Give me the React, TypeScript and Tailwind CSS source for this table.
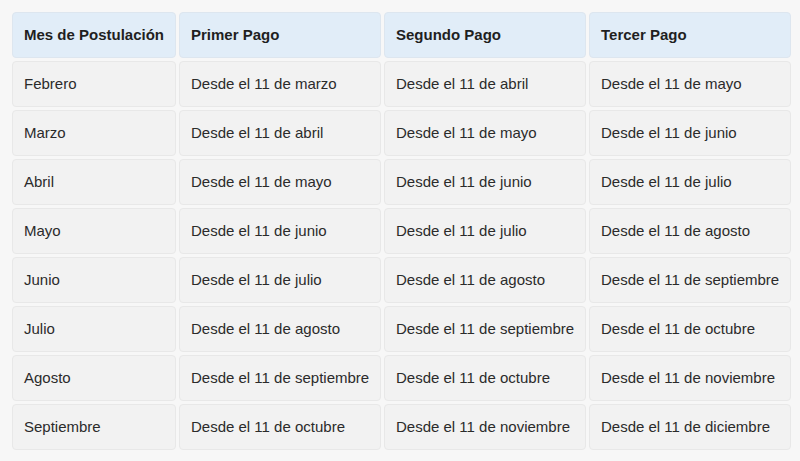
const rows: [string, string, string, string][] = [
  ['Febrero', 'marzo', 'abril', 'mayo'],
  ['Marzo', 'abril', 'mayo', 'junio'],
  ['Abril', 'mayo', 'junio', 'julio'],
  ['Mayo', 'junio', 'julio', 'agosto'],
  ['Junio', 'julio', 'agosto', 'septiembre'],
  ['Julio', 'agosto', 'septiembre', 'octubre'],
  ['Agosto', 'septiembre', 'octubre', 'noviembre'],
  ['Septiembre', 'octubre', 'noviembre', 'diciembre'],
];

const headers = ['Mes de Postulación', 'Primer Pago', 'Segundo Pago', 'Tercer Pago'];

const cell =
  'flex items-center whitespace-nowrap pl-[11px] pr-1 rounded-[4px] border border-[#e8e8e8] bg-[#f2f2f2] text-[15px] text-[#2b2b2b]';

export default function App() {
  return (
    <main
      className="min-h-[461px] w-[800px] bg-[#f7f7f7] pt-[12px] pl-[12px]"
      style={{ fontFamily: '"Liberation Sans", Arial, sans-serif' }}
    >
      <div className="grid grid-cols-[164px_202px_202px_202px] auto-rows-[46px] gap-[3px]">
        {/* Header */}
        {headers.map((h) => (
          <div
            key={h}
            className="flex items-center whitespace-nowrap pl-[11px] pr-1 rounded-[4px] border border-[#dde6ef] bg-[#e1edf8] text-[15px] font-bold text-[#1f1f1f]"
          >
            {h}
          </div>
        ))}

        {/* Body */}
        {rows.flatMap((r) => [
          <div key={r[0]} className={cell}>
            {r[0]}
          </div>,
          ...r.slice(1).map((m, i) => (
            <div key={r[0] + i} className={cell}>
              Desde el 11 de {m}
            </div>
          )),
        ])}
      </div>
    </main>
  );
}
